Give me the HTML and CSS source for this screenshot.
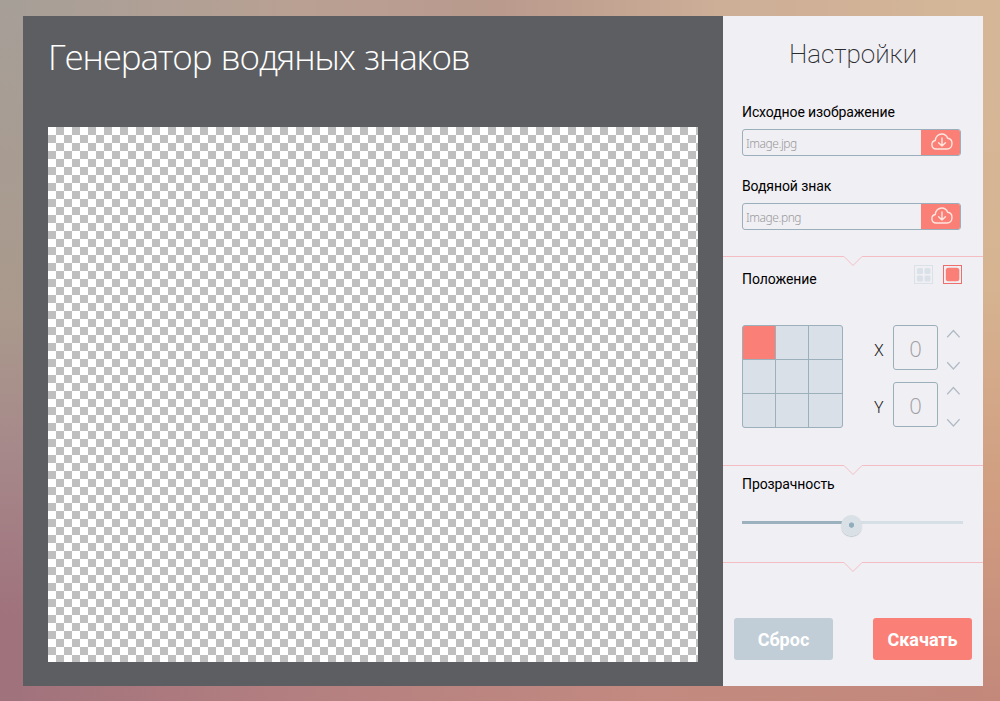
FILE: index.html
```html
<!DOCTYPE html>
<html lang="ru">
<head>
<meta charset="utf-8">
<title>Генератор водяных знаков</title>
<link rel="stylesheet" href="styles.css">
</head>
<body>
<div class="app">
  <main class="workspace">
    <h1 class="title">Генератор водяных знаков</h1>
    <div class="canvas"></div>
  </main>
  <aside class="settings">
    <section class="files">
      <h2 class="heading">Настройки</h2>
      <div class="label">Исходное изображение</div>
      <div class="upload"><span class="filename">Image.jpg</span><button class="pick" aria-label="Загрузить">
        <svg class="cloud" width="22" height="18" viewBox="0 0 22 18"><path d="M5.7 16H5.1A4.3 4.3 0 0 1 4.3 7.5C4.5 3.8 7.3 1 10.8 1C13.6 1 15.6 2.5 16.6 5.2C19.3 5.4 21 7.7 21 10.6C21 13.7 18.9 16 16 16H5.1"/><path d="M11 5V13M7.6 9.7L11 13L14.4 9.7"/></svg></button></div>
      <div class="label label-second">Водяной знак</div>
      <div class="upload"><span class="filename">Image.png</span><button class="pick" aria-label="Загрузить">
        <svg class="cloud" width="22" height="18" viewBox="0 0 22 18"><path d="M5.7 16H5.1A4.3 4.3 0 0 1 4.3 7.5C4.5 3.8 7.3 1 10.8 1C13.6 1 15.6 2.5 16.6 5.2C19.3 5.4 21 7.7 21 10.6C21 13.7 18.9 16 16 16H5.1"/><path d="M11 5V13M7.6 9.7L11 13L14.4 9.7"/></svg></button></div>
    </section>
    <svg class="divider" width="260" height="11" viewBox="0 0 260 11"><path d="M0 .5H121L130 9.5L139 .5H260"/></svg>
    <section class="position">
      <div class="position-head">
        <div class="label">Положение</div>
        <div class="modes">
          <svg class="mode" width="19" height="19" viewBox="0 0 19 19"><rect class="mode-frame" x=".5" y=".5" width="18" height="18"/><rect x="3" y="3" width="6" height="6" rx="1.5"/><rect x="10.5" y="3" width="6" height="6" rx="1.5"/><rect x="3" y="10.5" width="6" height="6" rx="1.5"/><rect x="10.5" y="10.5" width="6" height="6" rx="1.5"/></svg>
          <svg class="mode mode-active" width="19" height="19" viewBox="0 0 19 19"><rect class="mode-frame" x=".5" y=".5" width="18" height="18"/><rect x="2.8" y="2.8" width="13.5" height="13.5" rx="2.5"/></svg>
        </div>
      </div>
      <div class="placement">
        <div class="grid"><i class="cell cell-active"></i><i class="cell"></i><i class="cell"></i><i class="cell"></i><i class="cell"></i><i class="cell"></i><i class="cell"></i><i class="cell"></i><i class="cell"></i></div>
        <div class="coords">
          <div class="coord"><span class="axis">X</span><span class="value">0</span><svg class="arrows" width="14" height="45" viewBox="0 0 14 45"><path d="M1.2 12.3L7.4 5.5L13.6 12.3M1.2 37.2L7.4 44L13.6 37.2"/></svg></div>
          <div class="coord"><span class="axis">Y</span><span class="value">0</span><svg class="arrows" width="14" height="45" viewBox="0 0 14 45"><path d="M1.2 12.3L7.4 5.5L13.6 12.3M1.2 37.2L7.4 44L13.6 37.2"/></svg></div>
        </div>
      </div>
    </section>
    <svg class="divider" width="260" height="11" viewBox="0 0 260 11"><path d="M0 .5H121L130 9.5L139 .5H260"/></svg>
    <section class="opacity">
      <div class="label">Прозрачность</div>
      <div class="slider"><div class="fill"></div><div class="knob"></div></div>
    </section>
    <svg class="divider" width="260" height="11" viewBox="0 0 260 11"><path d="M0 .5H121L130 9.5L139 .5H260"/></svg>
    <div class="actions">
      <button class="button button-reset">Сброс</button>
      <button class="button button-download">Скачать</button>
    </div>
  </aside>
</div>
</body>
</html>
```

FILE: styles.css
```css
* { box-sizing: border-box; }

body {
  margin: 0;
  height: 701px;
  padding: 16px 17px 15px 23px;
  overflow: hidden;
  font-family: Roboto, sans-serif;
  background:
    linear-gradient(#a69f98, #aa998c 45%, #a6888a 65%, #a0727c 88%) 0 0 / 23px 100% no-repeat,
    linear-gradient(#d5b798, #d6b492 40%, #d09c80 72%, #c3887a) 100% 0 / 17px 100% no-repeat,
    linear-gradient(to right, #a69f98, #b9a093 30%, #b99a8d 50%, #cdae97 72%, #d5b798) 0 0 / 100% 16px no-repeat,
    linear-gradient(to right, #a0727c, #b47f80 30%, #c28a80 65%, #c3887a);
}

.app { display: flex; width: 960px; height: 670px; }

.workspace { width: 700px; padding: 0 25px; background: #5d5e61; }

.title {
  margin: 0;
  height: 111px;
  padding-top: 17px;
  font: 300 35px/48px "Open Sans", sans-serif;
  letter-spacing: -1.15px;
  word-spacing: 1.5px;
  white-space: nowrap;
  color: #fff;
}

.canvas {
  height: 535px;
  background: repeating-conic-gradient(#bfbfbf 0 25%, #fff 0 50%) 0 0 / 16px 16px;
}

.settings {
  display: flex;
  flex-direction: column;
  width: 260px;
  background: #f0eff4;
}

.files { height: 240px; padding: 0 22px 0 19px; }

.heading {
  margin: 0;
  height: 86px;
  padding: 20px 0 0 3px;
  text-align: center;
  font-size: 26px;
  line-height: 36px;
  font-weight: 200;
  color: #2b2c31;
}

.label { font-size: 14px; line-height: 20px; letter-spacing: -0.1px; color: #000; }
.label-second { margin-top: 20px; }

.upload {
  display: flex;
  height: 27px;
  margin-top: 7px;
  border: 1px solid #9baebc;
  border-radius: 3px;
  overflow: hidden;
}

.filename {
  flex: 1;
  padding: 1px 0 0 3px;
  font: 300 12px/25px "Noto Sans", sans-serif;
  letter-spacing: -0.45px;
  color: #999;
}

.pick {
  display: flex;
  justify-content: center;
  width: 40px;
  height: 27px;
  margin: -1px -1px -1px 0;
  padding: 4px 0 0 1px;
  border: 0;
  background: #fa7f77;
}

.cloud { fill: none; stroke: #ffe6df; stroke-width: 1.4; stroke-linecap: round; stroke-linejoin: round; }

.divider { display: block; flex: none; margin-bottom: -11px; fill: none; stroke: #f3bdc3; }

.position { height: 209px; padding: 0 20px 0 19px; }
.position-head { display: flex; justify-content: space-between; height: 69px; padding: 9px 1px 0 0; }
.position-head .label { padding-top: 4px; }
.modes { display: flex; gap: 10px; }
.mode { fill: #dae1e8; }
.mode-active { fill: #fa7f77; }
.mode-frame { fill: none; stroke: #dae1e8; }
.mode-active .mode-frame { stroke: #ee6e6c; }

.placement { display: flex; justify-content: space-between; }

.grid {
  display: grid;
  grid-template: 33px 33px 33px / 32px 32px 33px;
  gap: 1px;
  width: 101px;
  height: 103px;
  border: 1px solid #9bb0bb;
  border-radius: 3px;
  background: #9bb0bb;
  overflow: hidden;
}

.cell { background: #d9e0e8; }
.cell-active { background: #fa7f77; }

.coords { display: flex; flex-direction: column; gap: 12px; }
.coord { display: flex; }
.axis { width: 19px; padding-top: 6px; font-size: 16px; line-height: 39px; font-weight: 300; color: #222; }

.value {
  width: 45px;
  height: 45px;
  margin-right: 8px;
  border: 1px solid #9bafbb;
  border-radius: 3px;
  text-align: center;
  font: 300 22px/45px "Open Sans", sans-serif;
  color: #a0a0a4;
}

.arrows { fill: none; stroke: #b1bbc6; stroke-width: 1.3; margin-right: 3px; }

.opacity { height: 97px; padding: 9px 20px 0 19px; }

.slider {
  position: relative;
  height: 3px;
  margin-top: 27px;
  background: #d6dfe5;
}

.fill { width: 50%; height: 3px; background: #9bb1bd; }

.knob {
  position: absolute;
  left: 99px;
  top: -6px;
  width: 21px;
  height: 21px;
  border-radius: 50%;
  background: radial-gradient(circle at 50% 48%, #91adbc 0 2.3px, #d9e0e6 3px);
  box-shadow: 0 1px 1px #bcc5cc;
}

.actions { display: flex; justify-content: space-between; padding: 56px 11px 0; }

.button {
  width: 99px;
  height: 42px;
  padding: 1px 0 0;
  border: 0;
  border-radius: 3px;
  font: 700 18px Roboto, sans-serif;
  color: #fff;
}

.button-reset { background: #c1ced7; }
.button-download { background: #fa7f77; }
```
